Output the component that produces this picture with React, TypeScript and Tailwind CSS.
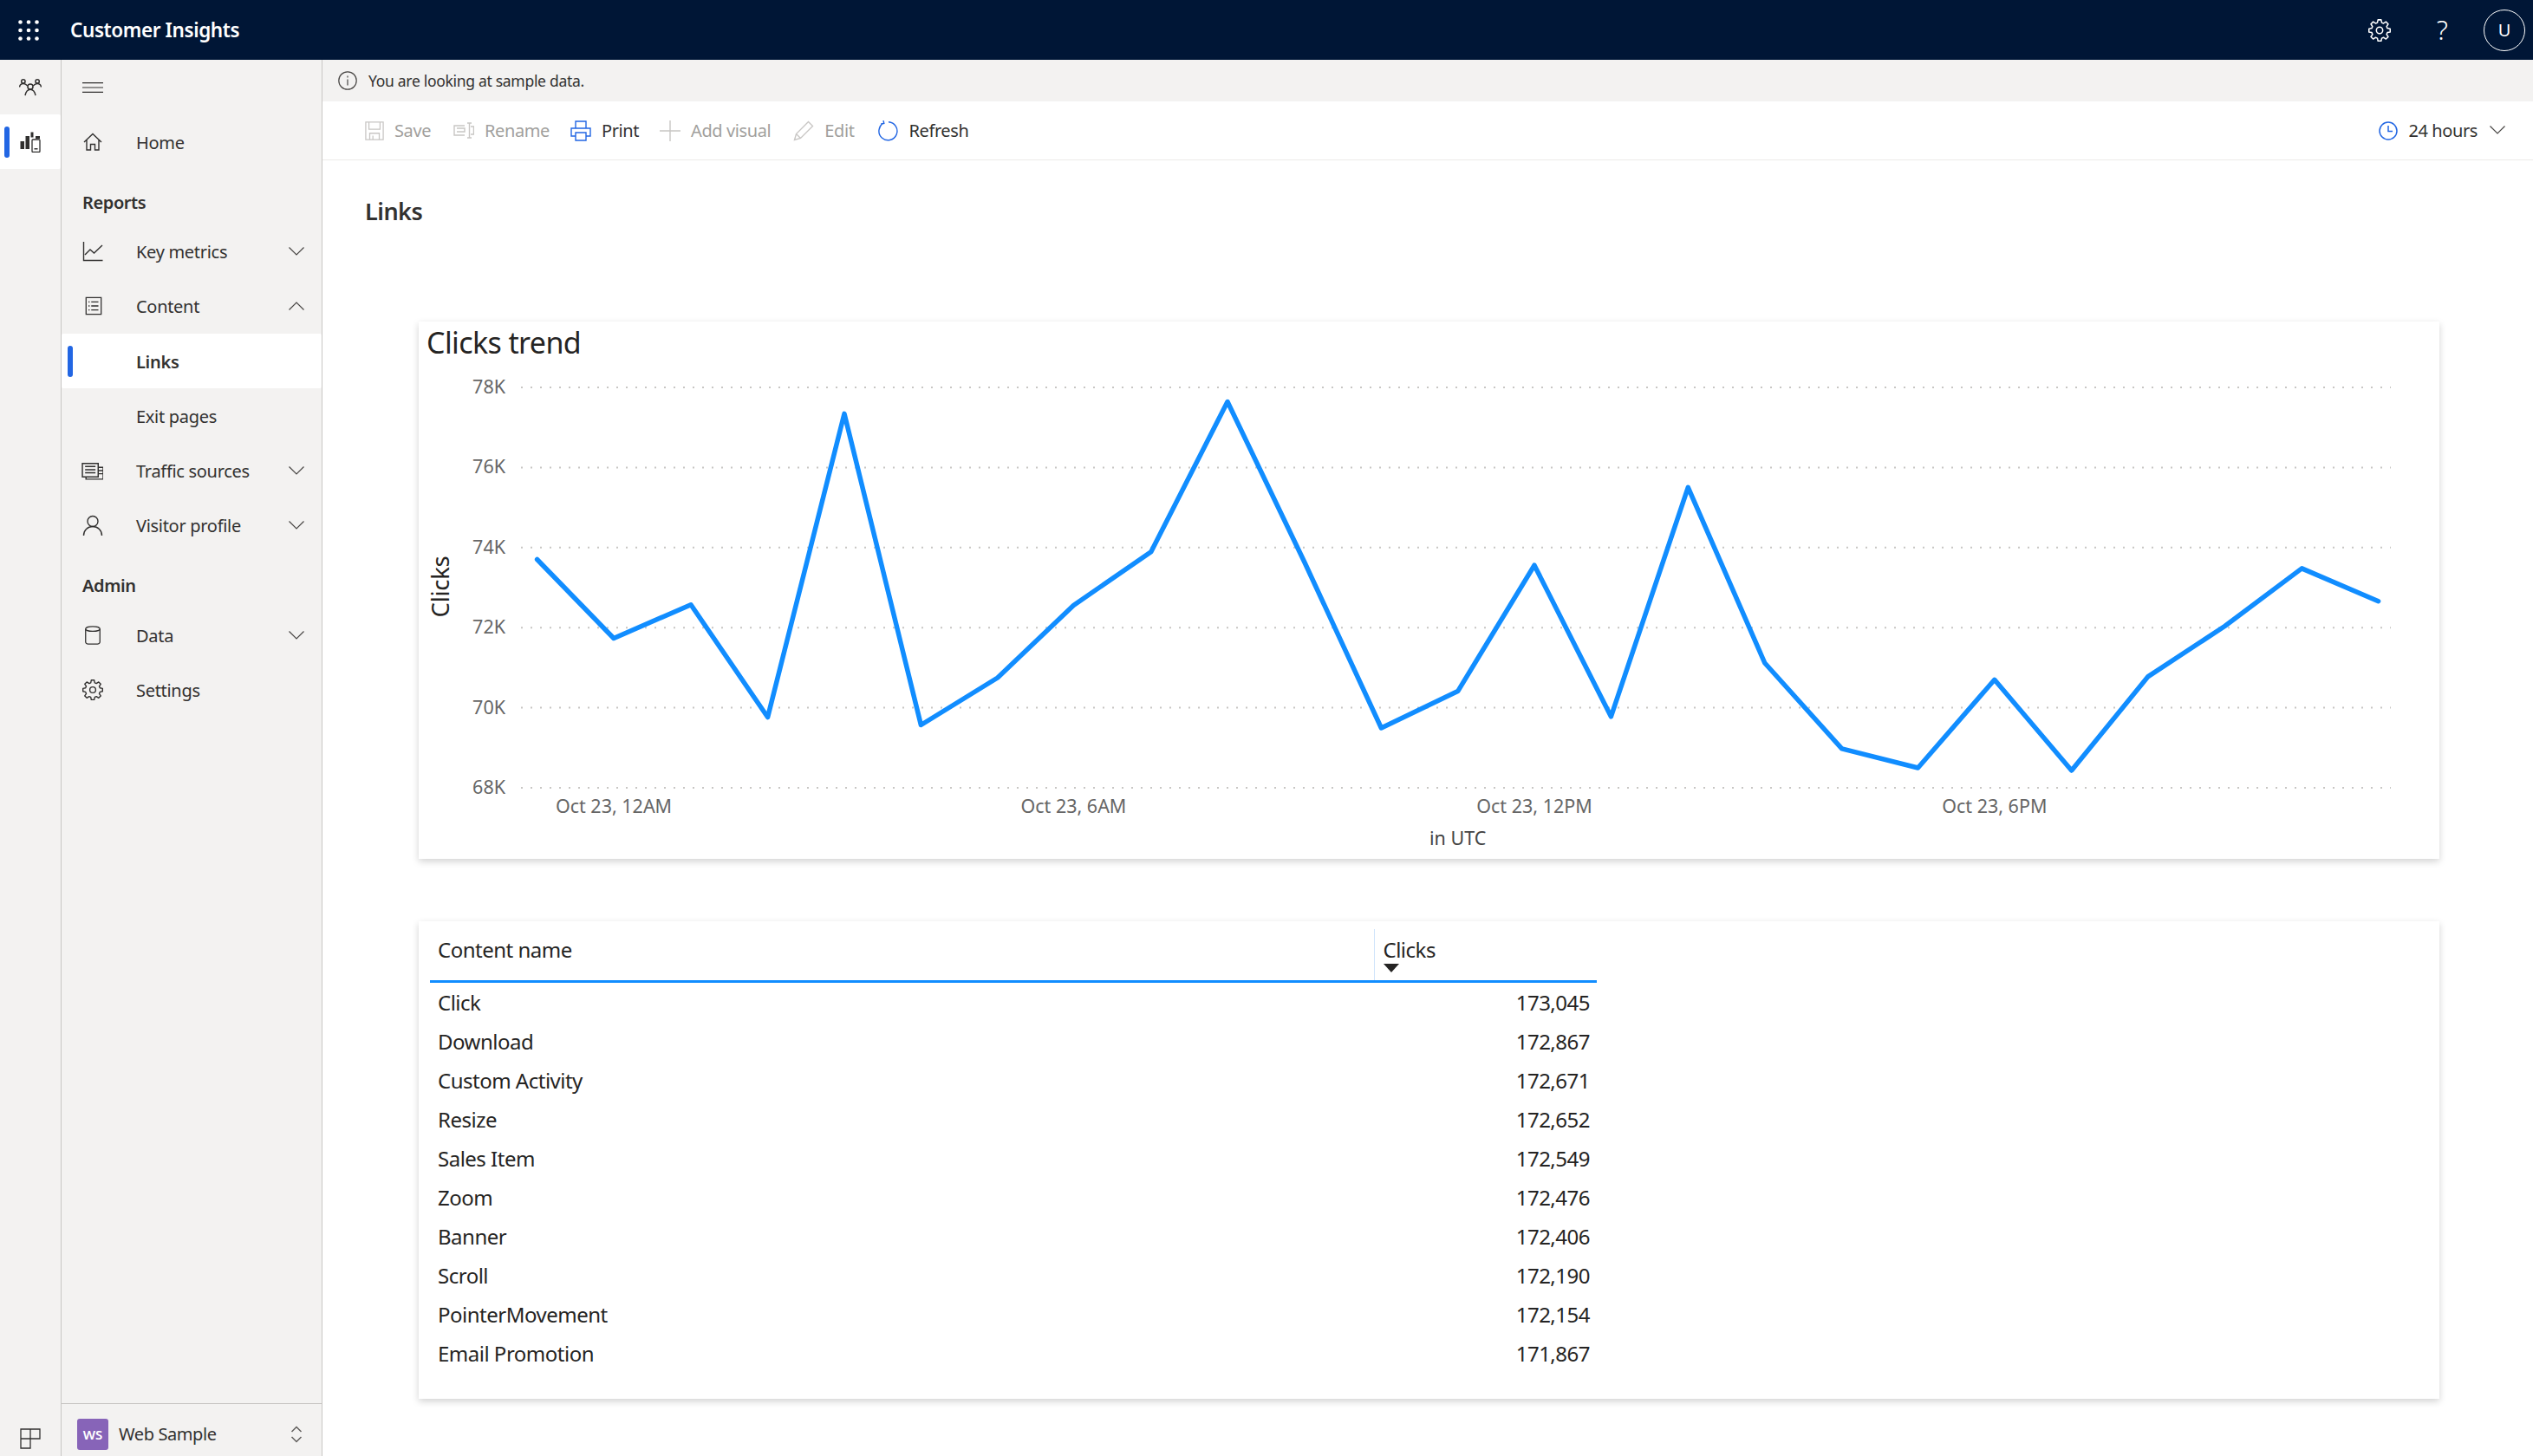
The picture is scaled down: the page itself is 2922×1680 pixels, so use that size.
import React from 'react';

const FONT = "font-['Noto_Sans','Open_Sans',sans-serif]";

const points: [number, number][] = [
  [619.6, 644.5], [708, 735.5], [797, 696.7], [885.6, 826.5], [974, 476.3], [1062.4, 835.5], [1150.8, 781],
  [1238.4, 697.5], [1327.8, 635.7], [1416, 462.5], [1505, 648], [1593.4, 839], [1681.7, 796.6], [1770, 651.2],
  [1858.4, 825.8], [1947.3, 561.3], [2035.8, 764], [2124.7, 862.8], [2212.5, 885], [2300.8, 783.3], [2389.7, 888],
  [2478, 779.6], [2566.4, 721.5], [2655.3, 654.9], [2743.6, 692.7],
];

const yTicks: [string, number][] = [
  ['78K', 445.9], ['76K', 538.4], ['74K', 630.8], ['72K', 723.2], ['70K', 815.6], ['68K', 908],
];

const xTicks: [string, number][] = [
  ['Oct 23, 12AM', 708], ['Oct 23, 6AM', 1238.4], ['Oct 23, 12PM', 1770], ['Oct 23, 6PM', 2300.8],
];

const rows: [string, string][] = [
  ['Click', '173,045'],
  ['Download', '172,867'],
  ['Custom Activity', '172,671'],
  ['Resize', '172,652'],
  ['Sales Item', '172,549'],
  ['Zoom', '172,476'],
  ['Banner', '172,406'],
  ['Scroll', '172,190'],
  ['PointerMovement', '172,154'],
  ['Email Promotion', '171,867'],
];

const Line = ({ size = 24, className = '', children }: { size?: number; className?: string; children: React.ReactNode }) => (
  <svg width={size} height={size} viewBox="0 0 24 24" fill="none" stroke="currentColor" strokeWidth={1.4} className={className}>
    {children}
  </svg>
);

const Chevron = ({ up = false }: { up?: boolean }) => (
  <svg width="18" height="10" viewBox="0 0 18 10" fill="none" stroke="#484644" strokeWidth={1.2}>
    <path d={up ? 'M0.5 9.5L9 1l8.500 8.500' : 'M0.500 0.500L9 9l8.500-8.500'} />
  </svg>
);

const GearPath = () => (
  <>
    <circle cx="12" cy="12" r="3.400" />
    <path d="M10.300 .8h3.400l.6 3 1.900.8 2.600-1.700 2.400 2.400-1.700 2.600.8 1.900 3 .6v3.400l-3 .6-.8 1.900 1.700 2.600-2.400 2.400-2.600-1.700-1.900.8-.6 3h-3.400l-.6-3-1.900-.8-2.600 1.700-2.400-2.400 1.700-2.600-.8-1.900-3-.6v-3.400l3-.6.8-1.900-1.700-2.600 2.400-2.400 2.600 1.700 1.900-.8z" strokeLinejoin="round" />
  </>
);

const NavRow = ({ icon, label, chevron, active, semibold }: { icon?: React.ReactNode; label: string; chevron?: 'up' | 'down'; active?: boolean; semibold?: boolean }) => (
  <div className={`relative flex h-[63.2px] items-center pl-[24px] pr-[20px] text-[20px] text-[#323130] ${active ? 'rounded-[2px] bg-white' : ''}`}>
    {active && <span className="absolute left-[7px] top-[14px] h-[36px] w-[6px] rounded-full bg-[#2266e3]" />}
    <span className="flex w-[62px] shrink-0 items-center justify-start">{icon}</span>
    <span className={`flex-1 pt-[2px] tracking-[-0.3px] ${semibold ? 'font-semibold' : ''}`}>{label}</span>
    {chevron && <Chevron up={chevron === 'up'} />}
  </div>
);

const ToolItem = ({ icon, label, disabled, className = '' }: { icon: React.ReactNode; label: string; disabled?: boolean; className?: string }) => (
  <div className={`flex items-center gap-[12px] ${disabled ? 'text-[#a19f9d]' : 'text-[#323130]'} ${className}`}>
    {icon}
    <span className="text-[20px] tracking-[-0.4px]">{label}</span>
  </div>
);

export default function App() {
  return (
    <div className={`flex h-[1680px] w-[2922px] flex-col overflow-hidden bg-white ${FONT}`}>
      {/* Top bar */}
      <header className="flex h-[69px] shrink-0 items-center bg-[#001636] text-white">
        <svg width="24" height="24" viewBox="0 0 24 24" fill="#fff" className="ml-[21px]">
          {[2.500, 12, 21.500].map((y) => [2.500, 12, 21.500].map((x) => <circle key={`${x}-${y}`} cx={x} cy={y} r="2.300" />))}
        </svg>
        <span className="ml-[36px] text-[22.500px] font-semibold tracking-[-0.4px]">Customer Insights</span>
        <div className="ml-auto flex items-center">
          <Line size={26} className="mr-[53px]"><GearPath /></Line>
          <span className="mr-[41px] text-[31px] font-light leading-none">?</span>
          <div className="mr-[9px] flex h-[48px] w-[48px] items-center justify-center rounded-full border border-white text-[20px]">U</div>
        </div>
      </header>

      <div className="flex min-h-0 flex-1">
        {/* Icon rail */}
        <aside className="flex w-[71px] shrink-0 flex-col border-r border-[#c8c6c4] bg-[#f3f2f1]">
          <div className="flex h-[63px] items-center justify-center text-[#323130]">
            <Line size={26}>
              <circle cx="12" cy="11" r="2.800" />
              <path d="M6.500 20.500c.6-3.500 2.700-6.500 5.500-6.500s4.900 3 5.500 6.500" />
              <circle cx="4.500" cy="5.500" r="2" />
              <circle cx="19.500" cy="5.500" r="2" />
              <path d="M.5 11.500c.3-2 1.500-3.600 4-3.600 1.600 0 3.300 1 4.500 2.300M23.500 11.500c-.3-2-1.500-3.600-4-3.600-1.600 0-3.300 1-4.500 2.300" />
            </Line>
          </div>
          <div className="relative flex h-[63px] items-center justify-center rounded-r-[2px] bg-white">
            <span className="absolute left-[5px] top-[14px] h-[36px] w-[6px] rounded-full bg-[#2266e3]" />
            <svg width="24" height="24" viewBox="0 0 24 24" fill="#323130">
              <rect x="0.500" y="11" width="4.500" height="9" />
              <rect x="6.500" y="5" width="4.500" height="15" />
              <rect x="12.500" y="0.500" width="3" height="6" />
              <rect x="18" y="5" width="5" height="3" />
              <rect x="14" y="9" width="9" height="14.500" rx="1" fill="none" stroke="#323130" strokeWidth="1.300" />
              <rect x="16.500" y="19" width="4" height="1.500" />
            </svg>
          </div>
          <div className="mt-auto flex h-[60px] items-start justify-center pt-[28px]">
            <svg width="24" height="24" viewBox="0 0 24 24" fill="none" stroke="#323130" strokeWidth="1.300">
              <path d="M1 1h22v11H12v11H1zM1 12h11M12 1v11" />
            </svg>
          </div>
        </aside>

        {/* Nav */}
        <nav className="flex w-[301px] shrink-0 flex-col border-r border-[#c8c6c4] bg-[#f3f2f1]">
          <div className="flex h-[63px] items-center pl-[24px]">
            <svg width="24" height="12" viewBox="0 0 24 12" stroke="#323130" strokeWidth="1.100">
              <path d="M0 .6h24M0 6h24M0 11.400h24" />
            </svg>
          </div>
          <NavRow label="Home" icon={<Line size={24} className="text-[#323130]"><path d="M2 12L12 2.500 22 12M5 9.500V21h4.500v-6.500h5V21H19V9.500" /></Line>} />
          <div className="flex h-[63.500px] items-center pl-[24px] pt-[15px] text-[20px] font-semibold tracking-[-0.4px] text-[#323130]">Reports</div>
          <NavRow label="Key metrics" chevron="down" icon={<Line size={24} className="text-[#323130]"><path d="M1.500 1v21.500h22M3 16l6-6 4.500 4L23 5" /></Line>} />
          <NavRow label="Content" chevron="up" icon={<Line size={22} className="ml-[2px] text-[#323130]"><path d="M2.500 1.500h19v21h-19zM9 7h9M9 12h9M9 17h9M5.500 7h1.500M5.500 12h1.500M5.500 17h1.500" /></Line>} />
          <NavRow label="Links" active semibold />
          <NavRow label="Exit pages" />
          <NavRow label="Traffic sources" chevron="down" icon={<Line size={25} className="-ml-[1px] text-[#323130]"><path d="M1 3.500h17.500v15H1zM18.500 8H24v13H5v-2.500M4 7h11.500M4 10.500h11.500M4 14h11.500M18.500 11.500H24M18.500 15H24M8 18.500v0" /></Line>} />
          <NavRow label="Visitor profile" chevron="down" icon={<Line size={24} className="text-[#323130]"><circle cx="12" cy="7.500" r="6" /><path d="M1.500 24c0-6 4.500-10.500 10.500-10.500S22.500 18 22.500 24" /></Line>} />
          <div className="flex h-[63.500px] items-center pl-[24px] pt-[13px] text-[20px] font-semibold tracking-[-0.4px] text-[#323130]">Admin</div>
          <NavRow label="Data" chevron="down" icon={<Line size={22} className="ml-[1px] text-[#323130]"><ellipse cx="12" cy="4" rx="9" ry="3" /><path d="M3 4v16.500c0 1.600 2 2.500 3 2.500h12c1 0 3-.9 3-2.500V4" /></Line>} />
          <NavRow label="Settings" icon={<Line size={24} className="text-[#323130]"><GearPath /></Line>} />
          <div className="mt-auto flex h-[61px] items-center border-t border-[#c8c6c4] pl-[18px] pr-[20px] pt-[10px]">
            <div className="flex h-[36px] w-[36px] items-center justify-center rounded-[3px] bg-[#8764b8] text-[15px] font-semibold text-white">WS</div>
            <span className="ml-[12px] flex-1 text-[20px] tracking-[-0.4px] text-[#323130]">Web Sample</span>
            <svg width="14" height="20" viewBox="0 0 14 20" fill="none" stroke="#605e5c" strokeWidth="1.500" className="mr-[2px]">
              <path d="M1.500 7L7 1.500 12.500 7M1.500 13L7 18.500 12.500 13" />
            </svg>
          </div>
        </nav>

        {/* Main */}
        <main className="flex min-w-0 flex-1 flex-col">
          <div className="flex h-[48px] shrink-0 items-center gap-[13px] bg-[#f3f2f1] pl-[18px] text-[#323130]">
            <svg width="22" height="22" viewBox="0 0 22 22" fill="none" stroke="#484644" strokeWidth="1.200">
              <circle cx="11" cy="11" r="10.200" />
              <path d="M11 9.500v7M11 5.500v2" />
            </svg>
            <span className="text-[17.500px] tracking-[-0.3px]">You are looking at sample data.</span>
          </div>

          <div className="flex h-[68px] shrink-0 items-center border-b border-[#edebe9] pl-[49px] pr-[32px]">
            <ToolItem disabled label="Save" icon={<Line size={22} className="text-[#c8c6c4]"><path d="M1 1h22v22H1zM5 1v9h14V1M6 23v-8h12v8M10 23v-5" /></Line>} />
            <ToolItem disabled label="Rename" className="ml-[26px]" icon={<Line size={24} className="text-[#c8c6c4]"><path d="M13 6H1v11h12M4 9h9v4H4M16 3h5M16 20h5M18.500 3v17M20 7h3.500v9H20" /></Line>} />
            <ToolItem label="Print" className="ml-[24px]" icon={<Line size={24} className="text-[#2266e3]"><path d="M6 9V1h12v8M6 18H1V9h22v9h-5M6 14h12v9H6z" /></Line>} />
            <ToolItem disabled label="Add visual" className="ml-[24px]" icon={<Line size={24} className="text-[#c8c6c4]"><path d="M12 0v24M0 12h24" /></Line>} />
            <ToolItem disabled label="Edit" className="ml-[26px]" icon={<Line size={24} className="text-[#c8c6c4]"><path d="M1.500 22.500l2-7L17.500 1.500l5 5-14 14zM3.500 15.500l5 5" /></Line>} />
            <ToolItem label="Refresh" className="ml-[27px]" icon={<Line size={24} className="text-[#2266e3]"><path d="M13 1.800A10.500 10.500 0 1 1 7.500 3M7 0l.8 3.400-3.600.6" /></Line>} />
            <div className="ml-auto flex items-center text-[#323130]">
              <svg width="22" height="22" viewBox="0 0 22 22" fill="none" stroke="#2266e3" strokeWidth="1.500">
                <circle cx="11" cy="11" r="10" />
                <path d="M11 5v6.500h5" />
              </svg>
              <span className="ml-[12px] text-[20px] tracking-[-0.4px]">24 hours</span>
              <span className="ml-[14px] -mt-[2px]"><Chevron /></span>
            </div>
          </div>

          <h1 className="pl-[49px] pt-[39px] text-[27px] font-semibold leading-[40px] tracking-[-0.5px] text-[#323130]">Links</h1>

          {/* Clicks trend */}
          <section className="ml-[111px] mt-[107px] flex h-[620px] w-[2331px] shrink-0 flex-col bg-white shadow-[0_3px_8px_rgba(0,0,0,0.18)]">
            <div className="h-[52px] pl-[9px] text-[34px] leading-[48px] tracking-[-0.6px] text-[#252423]">Clicks trend</div>
            <svg width="2331" height="568" viewBox="483 422 2331 568">
              {yTicks.map(([label, y]) => (
                <g key={label}>
                  <text x="583" y={y + 7} textAnchor="end" fontSize="21.500" fill="#666666">{label}</text>
                  <line x1="601" y1={y} x2="2758" y2={y} stroke="#c8c6c4" strokeWidth="2" strokeDasharray="2 9" />
                </g>
              ))}
              {xTicks.map(([label, x]) => (
                <text key={label} x={x} y="937" textAnchor="middle" fontSize="21.500" fill="#666666">{label}</text>
              ))}
              <text x="1681.700" y="974" textAnchor="middle" fontSize="21.500" fill="#444444">in UTC</text>
              <text transform="translate(518 676) rotate(-90)" textAnchor="middle" fontSize="27.500" letterSpacing="-0.300" fill="#252423">Clicks</text>
              <polyline points={points.map((p) => p.join(',')).join(' ')} fill="none" stroke="#118dff" strokeWidth="5.500" strokeLinejoin="round" strokeLinecap="round" />
            </svg>
          </section>

          {/* Table */}
          <section className="ml-[111px] mt-[72px] h-[551px] w-[2331px] shrink-0 bg-white pl-[13px] pt-[9px] text-[24px] text-[#252423] shadow-[0_3px_8px_rgba(0,0,0,0.18)]">
            <table className="w-[1346px] table-fixed border-collapse tracking-[-0.5px]">
              <thead>
                <tr className="h-[60px] border-b-[3px] border-[#118dff]">
                  <th className="w-[1089px] pb-[10px] pl-[9px] text-left font-normal">Content name</th>
                  <th className="relative border-l border-[#cfe4fb] pb-[10px] pl-[10px] text-left font-normal">
                    Clicks
                    <svg width="18" height="10" viewBox="0 0 18 10" className="absolute bottom-[9px] left-[10px]">
                      <path d="M0 0h18L9 10z" fill="#252423" />
                    </svg>
                  </th>
                </tr>
              </thead>
              <tbody>
                {rows.map(([name, clicks]) => (
                  <tr key={name} className="h-[45px]">
                    <td className="pl-[9px] pt-[4px]">{name}</td>
                    <td className="pr-[8px] pt-[4px] text-right">{clicks}</td>
                  </tr>
                ))}
              </tbody>
            </table>
          </section>
        </main>
      </div>
    </div>
  );
}
